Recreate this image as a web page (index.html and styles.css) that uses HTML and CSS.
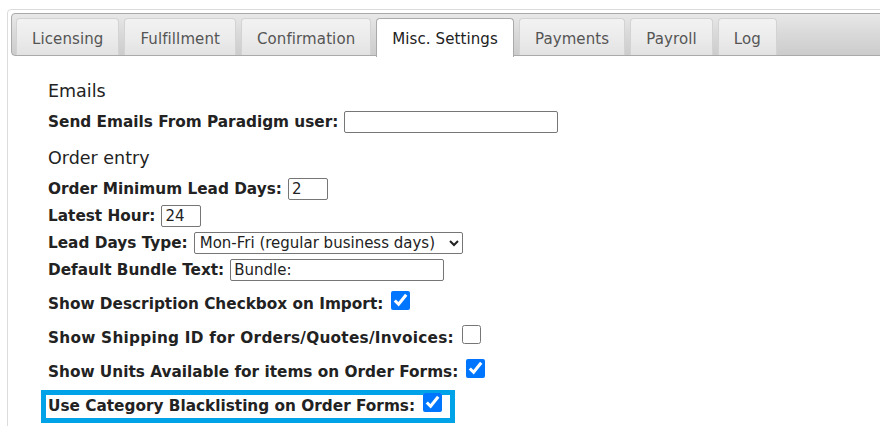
FILE: index.html
```html
<!DOCTYPE html>
<html>
<head>
<meta charset="utf-8">
<link rel="stylesheet" href="styles.css">
</head>
<body>
<div class="panel">
  <ul class="tabbar">
    <li class="tab">Licensing</li>
    <li class="tab">Fulfillment</li>
    <li class="tab">Confirmation</li>
    <li class="tab active">Misc. Settings</li>
    <li class="tab">Payments</li>
    <li class="tab">Payroll</li>
    <li class="tab">Log</li>
  </ul>
  <div class="content">
    <h3 class="heading first">Emails</h3>
    <div class="row">
      <label class="lbl">Send Emails From Paradigm user:</label>
      <input class="txt w-wide" type="text" value="">
    </div>
    <h3 class="heading">Order entry</h3>
    <div class="row">
      <label class="lbl">Order Minimum Lead Days:</label>
      <input class="txt w-small" type="text" value="2">
    </div>
    <div class="row">
      <label class="lbl">Latest Hour:</label>
      <input class="txt w-small" type="text" value="24">
    </div>
    <div class="row">
      <label class="lbl">Lead Days Type:</label>
      <select class="sel">
        <option>Mon-Fri (regular business days)</option>
      </select>
    </div>
    <div class="row">
      <label class="lbl">Default Bundle Text:</label>
      <input class="txt w-wide" type="text" value="Bundle:">
    </div>
    <div class="crow first-c">
      <label class="lbl">Show Description Checkbox on Import:</label>
      <input class="chk" type="checkbox" checked>
    </div>
    <div class="crow">
      <label class="lbl wide-slash">Show Shipping ID for Orders/Quotes/Invoices:</label>
      <input class="chk" type="checkbox">
    </div>
    <div class="crow">
      <label class="lbl">Show Units Available for items on Order Forms:</label>
      <input class="chk" type="checkbox" checked>
    </div>
    <div class="crow">
      <div class="highlight">
        <label class="lbl">Use Category Blacklisting on Order Forms:</label>
        <input class="chk" type="checkbox" checked>
      </div>
    </div>
  </div>
</div>
</body>
</html>
```
FILE: styles.css
```css
html, body {
  margin: 0;
  padding: 0;
  background: #fff;
  overflow: hidden;
}
body {
  font-family: "DejaVu Sans", Verdana, sans-serif;
  color: #222;
}
.panel {
  margin: 9px 0 0 7px;
  width: 900px;
  height: 420px;
  border: 1px solid #dcdcdc;
  border-radius: 4px;
  padding: 3px;
}
.tabbar {
  list-style: none;
  margin: 0;
  padding: 4px 0 0 4px;
  display: flex;
  gap: 5px;
  border: 1px solid #aaa;
  border-radius: 4px;
  background: linear-gradient(#e8e8e8 0%, #dadada 45%, #cccccc 100%);
  height: 37px;
}
.tab {
  height: 32px;
  padding: 4px 15px 0;
  border: 1px solid #d3d3d3;
  border-bottom: none;
  border-radius: 4px 4px 0 0;
  background: linear-gradient(#f2f2f2 0%, #ececec 50%, #e2e2e2 100%);
  color: #555;
  font-size: 15px;
  line-height: 32px;
  letter-spacing: 0.1px;
  white-space: nowrap;
}
.tab.active {
  background: #fff;
  border-color: #aaa;
  color: #212121;
  height: 34px;
  margin-bottom: -1px;
}
.content {
  padding: 20px 0 0 37px;
}
.heading {
  margin: 8px 0 2px;
  height: 30px;
  line-height: 30px;
  font-size: 17.5px;
  font-weight: normal;
  color: #222;
}
.heading.first {
  margin-top: 0;
}
.row {
  height: 27px;
  display: flex;
  align-items: center;
}
.lbl {
  font-weight: bold;
  font-size: 15.3px;
  white-space: nowrap;
}
.wide-slash {
  letter-spacing: 0.25px;
}
.txt {
  box-sizing: border-box;
  height: 22px;
  margin: 0 0 0 6px;
  padding: 0 3px;
  border: 1px solid #767676;
  border-radius: 2px;
  font-family: "DejaVu Sans", Verdana, sans-serif;
  font-size: 15px;
  color: #222;
  background: #fff;
}
.w-wide { width: 214px; }
.w-small { width: 40px; }
.sel {
  box-sizing: border-box;
  width: 269px;
  height: 22px;
  margin: 0 0 0 6px;
  padding: 0 0 0 1px;
  border: 1px solid #767676;
  border-radius: 2px;
  font-family: "DejaVu Sans", Verdana, sans-serif;
  font-size: 15px;
  color: #222;
  background: #fff;
}
.crow {
  height: 34px;
  display: flex;
  align-items: center;
}
.crow.first-c {
  margin-top: 4px;
}
.chk {
  width: 19px;
  height: 19px;
  margin: -4px 0 4px 8px;
}
.highlight {
  box-sizing: border-box;
  height: 33px;
  display: flex;
  align-items: center;
  margin-left: -7px;
  padding: 0 8px 0 2px;
  border: 5px solid #00a2e8;
}
```
